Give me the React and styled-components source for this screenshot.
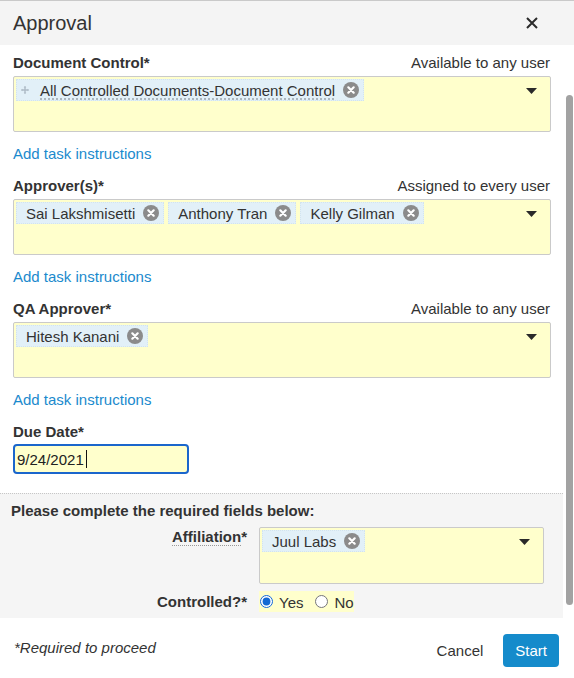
import React from "react";
import styled, { createGlobalStyle } from "styled-components";

const Global = createGlobalStyle`
  html, body { margin: 0; padding: 0; background: #fff; }
  body { font-family: "Liberation Sans", Arial, sans-serif; color: #333; font-size: 15px; }
  * { box-sizing: border-box; }
`;

const Dialog = styled.div`
  width: 574px;
  height: 678px;
  display: flex;
  flex-direction: column;
  background: #fff;
  border-top: 1px solid #c9c9c9;
  overflow: hidden;
`;

const Header = styled.div`
  height: 44px;
  flex: none;
  display: flex;
  align-items: center;
  justify-content: space-between;
  padding: 0 35px 0 13px;
  background: #f4f4f4;
`;

const Title = styled.h1`
  margin: 0;
  font-size: 20px;
  font-weight: normal;
  color: #333;
`;

const CloseButton = styled.button`
  border: 0;
  background: none;
  padding: 0;
  width: 14px;
  height: 14px;
  display: flex;
  align-items: center;
  justify-content: center;
  cursor: pointer;
`;

const ScrollArea = styled.div`
  height: 575px;
  flex: none;
  display: flex;
`;

const Content = styled.div`
  flex: 1;
  display: flex;
  flex-direction: column;
  overflow: hidden;
`;

const Gutter = styled.div`
  width: 11px;
  flex: none;
  padding: 50px 1px 0 3px;
`;

const Thumb = styled.div`
  width: 7px;
  height: 510px;
  border-radius: 4px;
  background: #a2a2a2;
`;

const Body = styled.div`
  padding: 9px 12px 19px 13px;
  display: flex;
  flex-direction: column;
`;

const Group = styled.div`
  display: flex;
  flex-direction: column;
  margin-bottom: 14px;
`;

const LabelRow = styled.div`
  display: flex;
  justify-content: space-between;
  align-items: center;
  height: 18px;
  line-height: 18px;
`;

const Label = styled.span`
  font-weight: bold;
  font-size: 15px;
  color: #333;
`;

const Hint = styled.span`
  font-size: 15px;
  color: #333;
  padding-right: 1px;
`;

const SelectBox = styled.div`
  margin-top: ${(p) => (p.$flush ? 0 : 4)}px;
  height: ${(p) => p.$height || 56}px;
  width: ${(p) => (p.$width ? p.$width + "px" : "auto")};
  border: 1px solid #cacaca;
  border-radius: 2px;
  background: #ffffcc;
  padding: 2px;
  display: flex;
  align-items: flex-start;
`;

const ChipList = styled.div`
  flex: 1;
  display: flex;
  flex-wrap: wrap;
  gap: 4px;
`;

const Chip = styled.span`
  display: inline-flex;
  align-items: center;
  height: 22px;
  padding: 0 4px 0 ${(p) => (p.$handle ? 4 : 9)}px;
  background: #e2f0f8;
  border: 1px dotted #d2e4ef;
  font-size: 15px;
  color: #333;
  gap: 8px;
`;

const ChipText = styled.span`
  ${(p) =>
    p.$dotted &&
    `text-decoration: underline dotted #9aa4ac; text-underline-offset: 3px;`}
`;

const Handle = styled.span`
  display: inline-flex;
  margin-right: 3px;
`;

const CaretWrap = styled.span`
  flex: none;
  padding: 9px 11px 0 8px;
  display: flex;
`;

const Link = styled.a`
  display: block;
  margin-top: 13px;
  font-size: 15px;
  line-height: 18px;
  color: #1b8acd;
  text-decoration: none;
  align-self: flex-start;
  cursor: pointer;
`;

const DateInput = styled.div`
  margin-top: 3px;
  width: 176px;
  height: 30px;
  border: 2px solid #1a66cc;
  border-radius: 4px;
  background: #ffffcc;
  padding: 0 2px;
  display: flex;
  align-items: center;
  font-size: 15px;
  color: #222;
`;

const TextCursor = styled.span`
  display: inline-block;
  width: 1px;
  height: 18px;
  background: #111;
  margin-left: 2px;
`;

const Required = styled.div`
  border-top: 1px dotted #c6c6c6;
  background: #f5f5f5;
  padding: 8px 19px 6px 11px;
`;

const RequiredTitle = styled.div`
  font-weight: bold;
  font-size: 15px;
  line-height: 18px;
`;

const FormGrid = styled.div`
  margin-top: 7px;
  display: grid;
  grid-template-columns: 236px 285px;
  column-gap: 12px;
  row-gap: 7px;
`;

const SideLabel = styled.div`
  justify-self: end;
  align-self: ${(p) => (p.$center ? "center" : "start")};
  padding-top: ${(p) => (p.$center ? 0 : 1)}px;
  font-weight: bold;
  font-size: 15px;
  line-height: 18px;
`;

const Underlined = styled.span`
  border-bottom: 1px dotted #999;
`;

const RadioGroup = styled.div`
  justify-self: start;
  display: inline-flex;
  align-items: center;
  height: 21px;
  padding-left: 1px;
  background: #ffffcc;
`;

const RadioLabel = styled.label`
  display: inline-flex;
  align-items: center;
  gap: 6px;
  font-size: 15px;
  color: #333;
  margin-right: ${(p) => (p.$last ? 0 : 12)}px;
  padding-top: 2px;
`;

const Radio = styled.input`
  margin: 0;
  width: 13px;
  height: 13px;
  accent-color: #1268d3;
  position: relative;
  top: -1px;
`;

const Footer = styled.div`
  flex: 1;
  display: flex;
  align-items: center;
  padding: 2px 15px 0 14px;
`;

const Note = styled.span`
  font-style: italic;
  font-size: 15px;
  color: #333;
  margin-bottom: 5px;
  flex: 1;
`;

const CancelButton = styled.button`
  border: 0;
  background: none;
  font-family: inherit;
  font-size: 15px;
  color: #333;
  padding: 0;
  margin-right: 20px;
  cursor: pointer;
`;

const StartButton = styled.button`
  border: 0;
  height: 33px;
  padding: 0 12px;
  border-radius: 4px;
  background: #158bcb;
  color: #fff;
  font-family: inherit;
  font-size: 15px;
  cursor: pointer;
`;

const RemoveIcon = () => (
  <svg width="16" height="16" viewBox="0 0 16 16">
    <circle cx="8" cy="8" r="8" fill="#8b8b8b" />
    <path d="M5.3 5.3 L10.7 10.7 M10.7 5.3 L5.3 10.7" stroke="#fff" strokeWidth="2.2" strokeLinecap="round" />
  </svg>
);

const Caret = () => (
  <svg width="11" height="6" viewBox="0 0 11 6">
    <path d="M0 0 H11 L5.5 6 Z" fill="#2a2a2a" />
  </svg>
);

const MoveIcon = () => (
  <svg width="8" height="8" viewBox="0 0 8 8">
    <path d="M4 0.5 V7.5 M0.5 4 H7.5" stroke="#aebbc6" strokeWidth="1.4" />
    <path d="M4 0 L5.3 1.5 H2.7 Z M4 8 L5.3 6.5 H2.7 Z M0 4 L1.5 2.7 V5.3 Z M8 4 L6.5 2.7 V5.3 Z" fill="#aebbc6" />
  </svg>
);

const CloseIcon = () => (
  <svg width="12" height="12" viewBox="0 0 12 12">
    <path d="M1 1 L11 11 M11 1 L1 11" stroke="#2b2b2b" strokeWidth="2" />
  </svg>
);

const fields = [
  { label: "Document Control*", hint: "Available to any user", chips: ["All Controlled Documents-Document Control"], handle: true },
  { label: "Approver(s)*", hint: "Assigned to every user", chips: ["Sai Lakshmisetti", "Anthony Tran", "Kelly Gilman"] },
  { label: "QA Approver*", hint: "Available to any user", chips: ["Hitesh Kanani"] },
];

const ChipItem = ({ text, handle }) => (
  <Chip $handle={handle}>
    {handle && (
      <Handle>
        <MoveIcon />
      </Handle>
    )}
    <ChipText $dotted={handle}>{text}</ChipText>
    <RemoveIcon />
  </Chip>
);

export default function App() {
  return (
    <>
      <Global />
      <Dialog>
        <Header>
          <Title>Approval</Title>
          <CloseButton aria-label="Close">
            <CloseIcon />
          </CloseButton>
        </Header>
        <ScrollArea>
          <Content>
            <Body>
              {fields.map((f) => (
                <Group key={f.label}>
                  <LabelRow>
                    <Label>{f.label}</Label>
                    <Hint>{f.hint}</Hint>
                  </LabelRow>
                  <SelectBox>
                    <ChipList>
                      {f.chips.map((c) => (
                        <ChipItem key={c} text={c} handle={f.handle} />
                      ))}
                    </ChipList>
                    <CaretWrap>
                      <Caret />
                    </CaretWrap>
                  </SelectBox>
                  <Link>Add task instructions</Link>
                </Group>
              ))}
              <LabelRow>
                <Label>Due Date*</Label>
              </LabelRow>
              <DateInput>
                9/24/2021
                <TextCursor />
              </DateInput>
            </Body>
            <Required>
              <RequiredTitle>Please complete the required fields below:</RequiredTitle>
              <FormGrid>
                <SideLabel>
                  <Underlined>Affiliation</Underlined>*
                </SideLabel>
                <SelectBox $flush $height={57} $width={285}>
                  <ChipList>
                    <ChipItem text="Juul Labs" />
                  </ChipList>
                  <CaretWrap>
                    <Caret />
                  </CaretWrap>
                </SelectBox>
                <SideLabel $center>Controlled?*</SideLabel>
                <RadioGroup>
                  <RadioLabel>
                    <Radio type="radio" name="controlled" defaultChecked />
                    Yes
                  </RadioLabel>
                  <RadioLabel $last>
                    <Radio type="radio" name="controlled" />
                    No
                  </RadioLabel>
                </RadioGroup>
              </FormGrid>
            </Required>
          </Content>
          <Gutter>
            <Thumb />
          </Gutter>
        </ScrollArea>
        <Footer>
          <Note>*Required to proceed</Note>
          <CancelButton>Cancel</CancelButton>
          <StartButton>Start</StartButton>
        </Footer>
      </Dialog>
    </>
  );
}
